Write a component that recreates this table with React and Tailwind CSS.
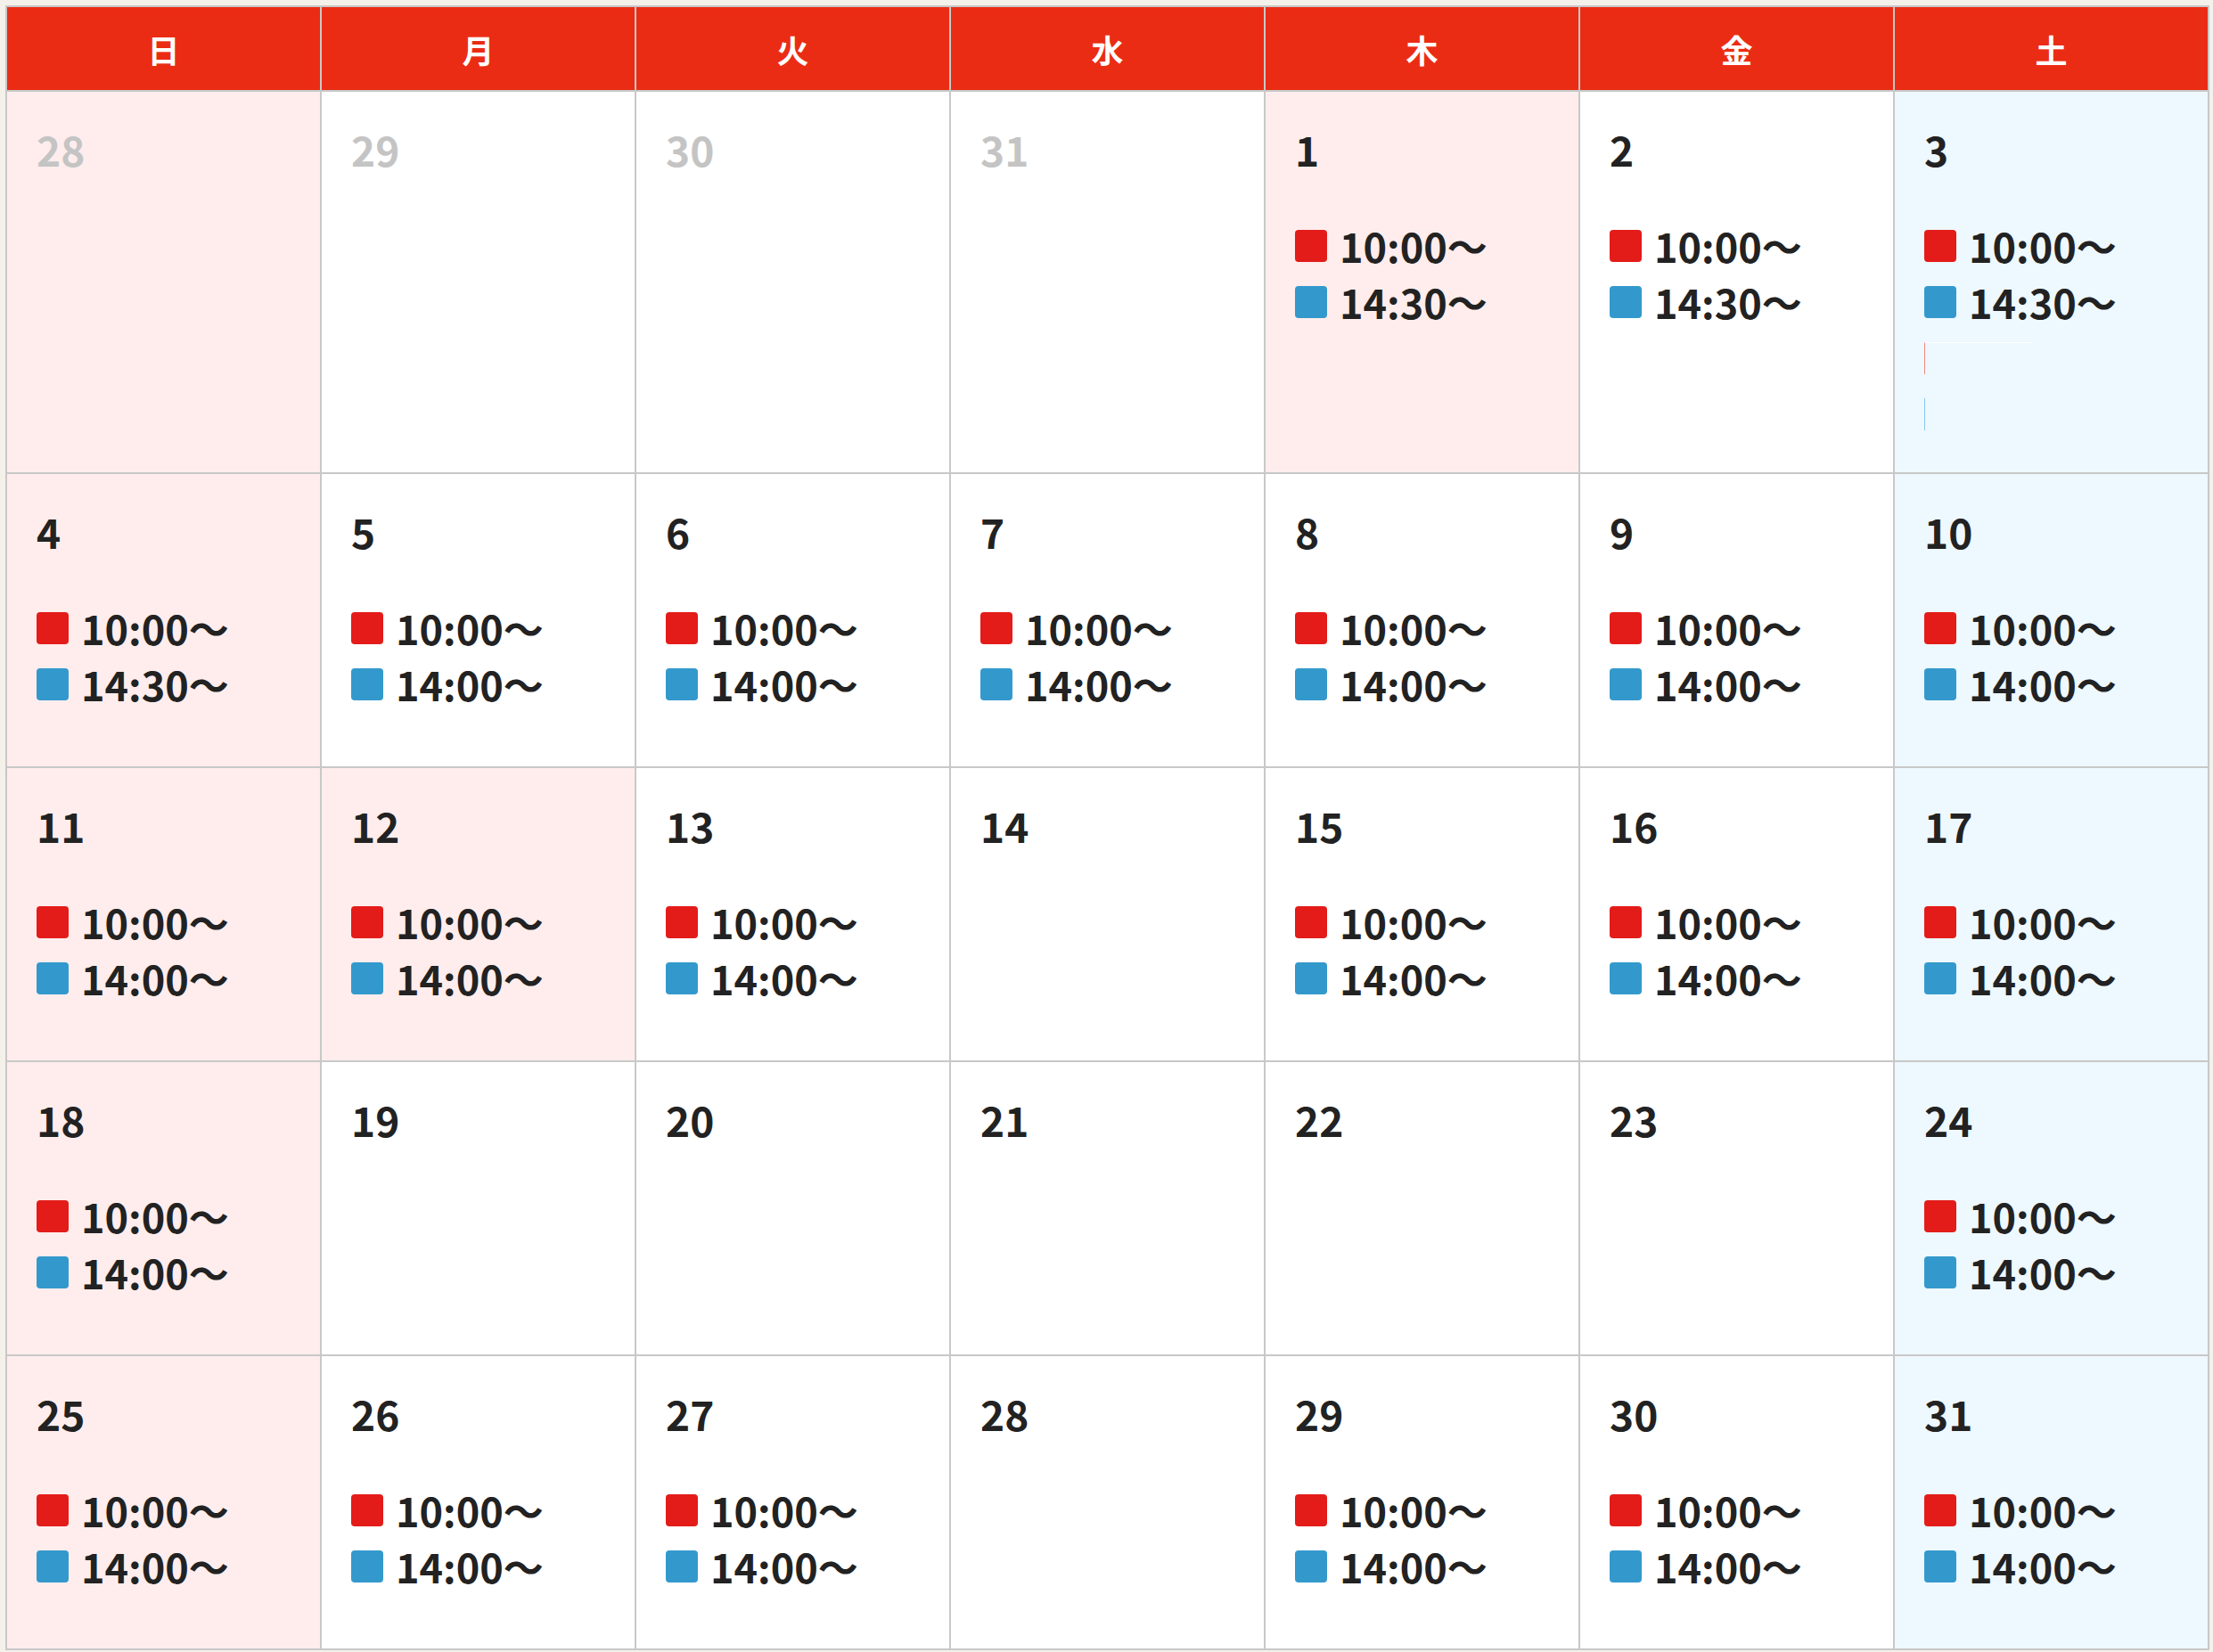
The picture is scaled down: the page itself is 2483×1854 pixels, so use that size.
const DAYS = ["日", "月", "火", "水", "木", "金", "土"];

const A = ["10:00〜", "14:30〜"];
const B = ["10:00〜", "14:00〜"];

// each week: [day, slots, extra]
const WEEKS = [
  [
    { d: 28, past: true },
    { d: 29, past: true },
    { d: 30, past: true },
    { d: 31, past: true },
    { d: 1, slots: A, holiday: true },
    { d: 2, slots: A },
    { d: 3, slots: A, blank: true },
  ],
  [
    { d: 4, slots: A },
    { d: 5, slots: B },
    { d: 6, slots: B },
    { d: 7, slots: B },
    { d: 8, slots: B },
    { d: 9, slots: B },
    { d: 10, slots: B },
  ],
  [
    { d: 11, slots: B },
    { d: 12, slots: B, holiday: true },
    { d: 13, slots: B },
    { d: 14 },
    { d: 15, slots: B },
    { d: 16, slots: B },
    { d: 17, slots: B },
  ],
  [
    { d: 18, slots: B },
    { d: 19 },
    { d: 20 },
    { d: 21 },
    { d: 22 },
    { d: 23 },
    { d: 24, slots: B },
  ],
  [
    { d: 25, slots: B },
    { d: 26, slots: B },
    { d: 27, slots: B },
    { d: 28 },
    { d: 29, slots: B },
    { d: 30, slots: B },
    { d: 31, slots: B },
  ],
];

function Slot({ time, idx }) {
  return (
    <div className="flex h-[63px] items-center">
      <span
        className={
          "mr-[14px] h-[36px] w-[36px] rounded-[4px] " +
          (idx === 0 ? "bg-[#e31c19]" : "bg-[#3399cc]")
        }
      />
      <span className="text-[45px] leading-[63px] font-bold text-[#222222]">{time}</span>
    </div>
  );
}

function Cell({ day, col }) {
  let bg = "bg-white";
  if (col === 0 || day.holiday) bg = "bg-[#ffeded]";
  if (col === 6) bg = "bg-[#eef8ff]";

  return (
    <div className={"flex flex-col border-r-2 border-b-2 border-[#c8c8c8] pt-[41px] pl-[33px] " + bg}>
      <div
        className={
          "text-[46px] leading-[46px] font-bold " +
          (day.past ? "text-[#c4c4c4]" : "text-[#222222]")
        }
      >
        {day.d}
      </div>
      {day.slots && (
        <div className="mt-[54px] flex flex-col">
          {day.slots.map((t, i) => (
            <Slot key={i} time={t} idx={i} />
          ))}
          {day.blank && (
            <>
              <div className="flex h-[63px] items-center">
                <span className="h-[36px] w-[120px] border-l border-t border-l-[#f08a80] border-t-white" />
              </div>
              <div className="flex h-[63px] items-center">
                <span className="h-[36px] w-px bg-[#8cc8ea]" />
              </div>
            </>
          )}
        </div>
      )}
    </div>
  );
}

export default function App() {
  return (
    <div
      className="min-h-[1854px] w-[2483px] bg-[#f4f0ea] pt-[6px] pl-[6px]"
      style={{ fontFamily: '"Noto Sans CJK JP", "Noto Sans", sans-serif' }}
    >
      <div className="grid w-[2473px] grid-cols-7 grid-rows-[95px_429px_330px_330px_330px_330px] border-t-2 border-l-2 border-[#c8c8c8]">
        {DAYS.map((d) => (
          <div
            key={d}
            className="flex items-center justify-center border-r-2 border-b-2 border-[#c8c8c8] bg-[#eb2c14] text-[36px] font-bold text-white"
          >
            {d}
          </div>
        ))}
        {WEEKS.map((week, w) =>
          week.map((day, c) => <Cell key={w + "-" + c} day={day} col={c} />)
        )}
      </div>
    </div>
  );
}
